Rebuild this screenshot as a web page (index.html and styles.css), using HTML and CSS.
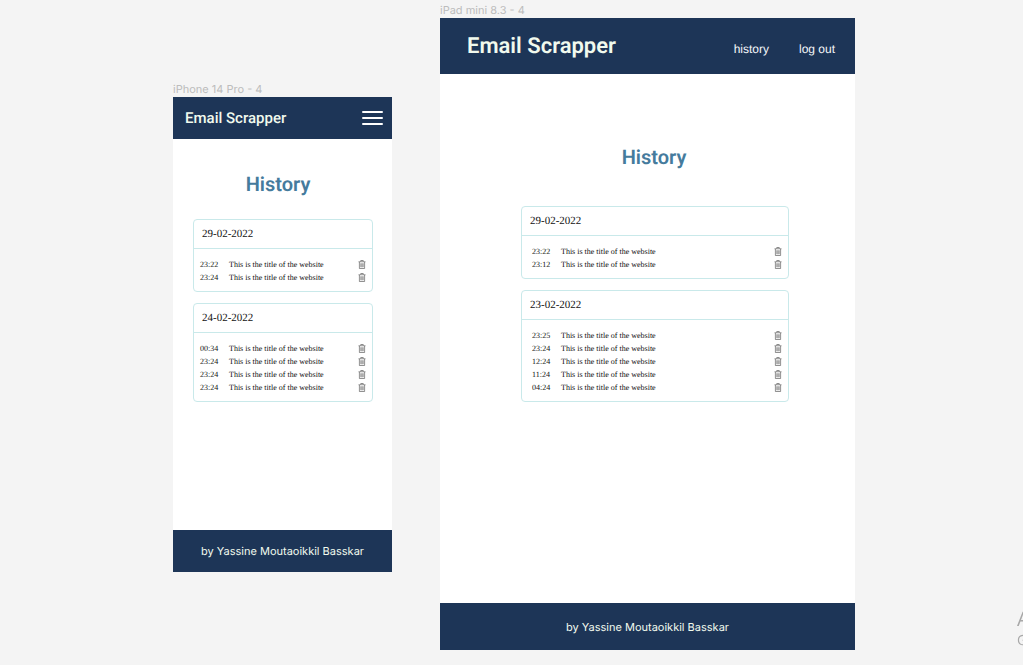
FILE: index.html
```html
<!DOCTYPE html>
<html lang="en">
<head>
<meta charset="utf-8">
<meta name="viewport" content="width=device-width, initial-scale=1">
<title>Email Scrapper</title>
<link rel="stylesheet" href="styles.css">
</head>
<body>
<svg class="defs" aria-hidden="true">
  <symbol id="trash" viewBox="0 0 16 18">
    <path d="M1 3.5h14M5.5 3V1h5v2M2.8 4v13h10.4V4M5.7 6.5v8M8 6.5v8M10.3 6.5v8" fill="none" stroke="currentColor" stroke-width="1.3"/>
  </symbol>
</svg>
<main class="canvas">
  <section class="artboard phone">
    <p class="label">iPhone 14 Pro - 4</p>
    <div class="frame">
      <header class="bar">
        <h1 class="brand">Email Scrapper</h1>
        <button class="menu" type="button" aria-label="Menu"><span></span><span></span><span></span></button>
      </header>
      <div class="content">
        <h2 class="heading">History</h2>
        <article class="card">
          <h3 class="date">29-02-2022</h3>
          <ul class="entries">
            <li class="entry"><time>23:22</time><span class="title">This is the title of the website</span><button class="delete" type="button" aria-label="Delete"><svg class="icon"><use href="#trash"/></svg></button></li>
            <li class="entry"><time>23:24</time><span class="title">This is the title of the website</span><button class="delete" type="button" aria-label="Delete"><svg class="icon"><use href="#trash"/></svg></button></li>
          </ul>
        </article>
        <article class="card">
          <h3 class="date">24-02-2022</h3>
          <ul class="entries">
            <li class="entry"><time>00:34</time><span class="title">This is the title of the website</span><button class="delete" type="button" aria-label="Delete"><svg class="icon"><use href="#trash"/></svg></button></li>
            <li class="entry"><time>23:24</time><span class="title">This is the title of the website</span><button class="delete" type="button" aria-label="Delete"><svg class="icon"><use href="#trash"/></svg></button></li>
            <li class="entry"><time>23:24</time><span class="title">This is the title of the website</span><button class="delete" type="button" aria-label="Delete"><svg class="icon"><use href="#trash"/></svg></button></li>
            <li class="entry"><time>23:24</time><span class="title">This is the title of the website</span><button class="delete" type="button" aria-label="Delete"><svg class="icon"><use href="#trash"/></svg></button></li>
          </ul>
        </article>
      </div>
      <footer class="footer">by Yassine Moutaoikkil Basskar</footer>
    </div>
  </section>
  <section class="artboard tablet">
    <p class="label">iPad mini 8.3 - 4</p>
    <div class="frame">
      <header class="bar">
        <h1 class="brand">Email Scrapper</h1>
        <nav class="nav"><a href="#history">history</a><a href="#logout">log out</a></nav>
      </header>
      <div class="content" id="history">
        <h2 class="heading">History</h2>
        <article class="card">
          <h3 class="date">29-02-2022</h3>
          <ul class="entries">
            <li class="entry"><time>23:22</time><span class="title">This is the title of the website</span><button class="delete" type="button" aria-label="Delete"><svg class="icon"><use href="#trash"/></svg></button></li>
            <li class="entry"><time>23:12</time><span class="title">This is the title of the website</span><button class="delete" type="button" aria-label="Delete"><svg class="icon"><use href="#trash"/></svg></button></li>
          </ul>
        </article>
        <article class="card">
          <h3 class="date">23-02-2022</h3>
          <ul class="entries">
            <li class="entry"><time>23:25</time><span class="title">This is the title of the website</span><button class="delete" type="button" aria-label="Delete"><svg class="icon"><use href="#trash"/></svg></button></li>
            <li class="entry"><time>23:24</time><span class="title">This is the title of the website</span><button class="delete" type="button" aria-label="Delete"><svg class="icon"><use href="#trash"/></svg></button></li>
            <li class="entry"><time>12:24</time><span class="title">This is the title of the website</span><button class="delete" type="button" aria-label="Delete"><svg class="icon"><use href="#trash"/></svg></button></li>
            <li class="entry"><time>11:24</time><span class="title">This is the title of the website</span><button class="delete" type="button" aria-label="Delete"><svg class="icon"><use href="#trash"/></svg></button></li>
            <li class="entry"><time>04:24</time><span class="title">This is the title of the website</span><button class="delete" type="button" aria-label="Delete"><svg class="icon"><use href="#trash"/></svg></button></li>
          </ul>
        </article>
      </div>
      <footer class="footer">by Yassine Moutaoikkil Basskar</footer>
    </div>
  </section>
</main>
<aside class="watermark"><p class="watermark-title">A</p><p class="watermark-text">G</p></aside>
</body>
</html>
```

FILE: styles.css
```css
* {
  box-sizing: border-box;
}

body,
h1,
h2,
h3,
p,
ul {
  margin: 0;
  padding: 0;
}

body {
  background: #f4f4f4;
  font-family: Inter, sans-serif;
  text-rendering: geometricPrecision;
}

.defs {
  display: none;
}

button {
  border: 0;
  padding: 0;
  background: none;
  cursor: pointer;
}

.canvas {
  display: grid;
  grid-template-columns: 219fr 415fr;
  column-gap: 48px;
  align-items: start;
  min-height: 100vh;
  padding: 3px 168px 15px 173px;
}

.label {
  color: #bcbcbc;
  font-size: 11px;
  line-height: 15px;
}

.frame {
  display: flex;
  flex-direction: column;
  background: #fff;
}

.bar {
  display: flex;
  align-items: center;
  justify-content: space-between;
  background: #1d3557;
}

.brand {
  color: #f1faee;
  font-family: Roboto, sans-serif;
  font-weight: 600;
}

.content {
  flex: 1;
  display: flex;
  flex-direction: column;
  gap: 11px;
}

.heading {
  color: #457b9d;
  font-family: Roboto, sans-serif;
  font-size: 20px;
  font-weight: 600;
  line-height: 24px;
  text-align: center;
}

.footer {
  display: flex;
  align-items: center;
  justify-content: center;
  background: #1d3557;
  color: #f1faee;
  font-size: 11px;
}

.card {
  border: 1px solid #c9e9ea;
  border-radius: 4px;
  font-family: "Liberation Serif", serif;
  color: #111;
}

.date {
  padding: 0 8px;
  border-bottom: 1px solid #c9e9ea;
  font-size: 11px;
  font-weight: 400;
  line-height: 28px;
}

.entries {
  list-style: none;
  padding: 9px 6px 7px;
}

.entry {
  display: grid;
  grid-template-columns: 20px 1fr 8px;
  column-gap: 9px;
  align-items: center;
  font-size: 8px;
  line-height: 13px;
}

.delete {
  display: flex;
  color: #555;
}

.icon {
  width: 8px;
  height: 9px;
}

.phone {
  padding-top: 79px;
}

.phone .frame {
  min-height: calc(100vh - 190px);
}

.phone .bar {
  height: 42px;
  padding: 0 9px 0 12px;
}

.phone .brand {
  font-size: 15px;
  font-weight: 500;
}

.phone .content {
  padding: 33px 19px 33px 20px;
}

.phone .heading {
  margin-bottom: 12px;
  padding-right: 10px;
}

.phone .footer {
  height: 42px;
}

.menu {
  display: flex;
  flex-direction: column;
  gap: 4px;
  width: 21px;
}

.menu span {
  height: 2px;
  border-radius: 1px;
  background: #fff;
}

.tablet .frame {
  min-height: calc(100vh - 33px);
}

.tablet .bar {
  height: 56px;
  padding: 0 20px 0 27px;
}

.tablet .brand {
  font-size: 22px;
}

.nav {
  display: flex;
  gap: 30px;
  padding-top: 6px;
}

.nav a {
  color: #f4f7fa;
  font-family: "Liberation Sans", sans-serif;
  font-size: 12px;
  text-decoration: none;
}

.tablet .content {
  padding: 71px 66px 71px 81px;
}

.tablet .heading {
  margin-bottom: 26px;
  padding-right: 2px;
}

.tablet .entries {
  padding: 9px 6px 7px 10px;
}

.tablet .footer {
  height: 47px;
}

.watermark {
  position: fixed;
  right: 0;
  bottom: 14px;
  width: 6px;
  overflow: hidden;
  color: #a8a8a8;
  font-family: "Open Sans", sans-serif;
}

.watermark-title {
  font-size: 20px;
  line-height: 24px;
}

.watermark-text {
  font-size: 14px;
  line-height: 20px;
}
```
